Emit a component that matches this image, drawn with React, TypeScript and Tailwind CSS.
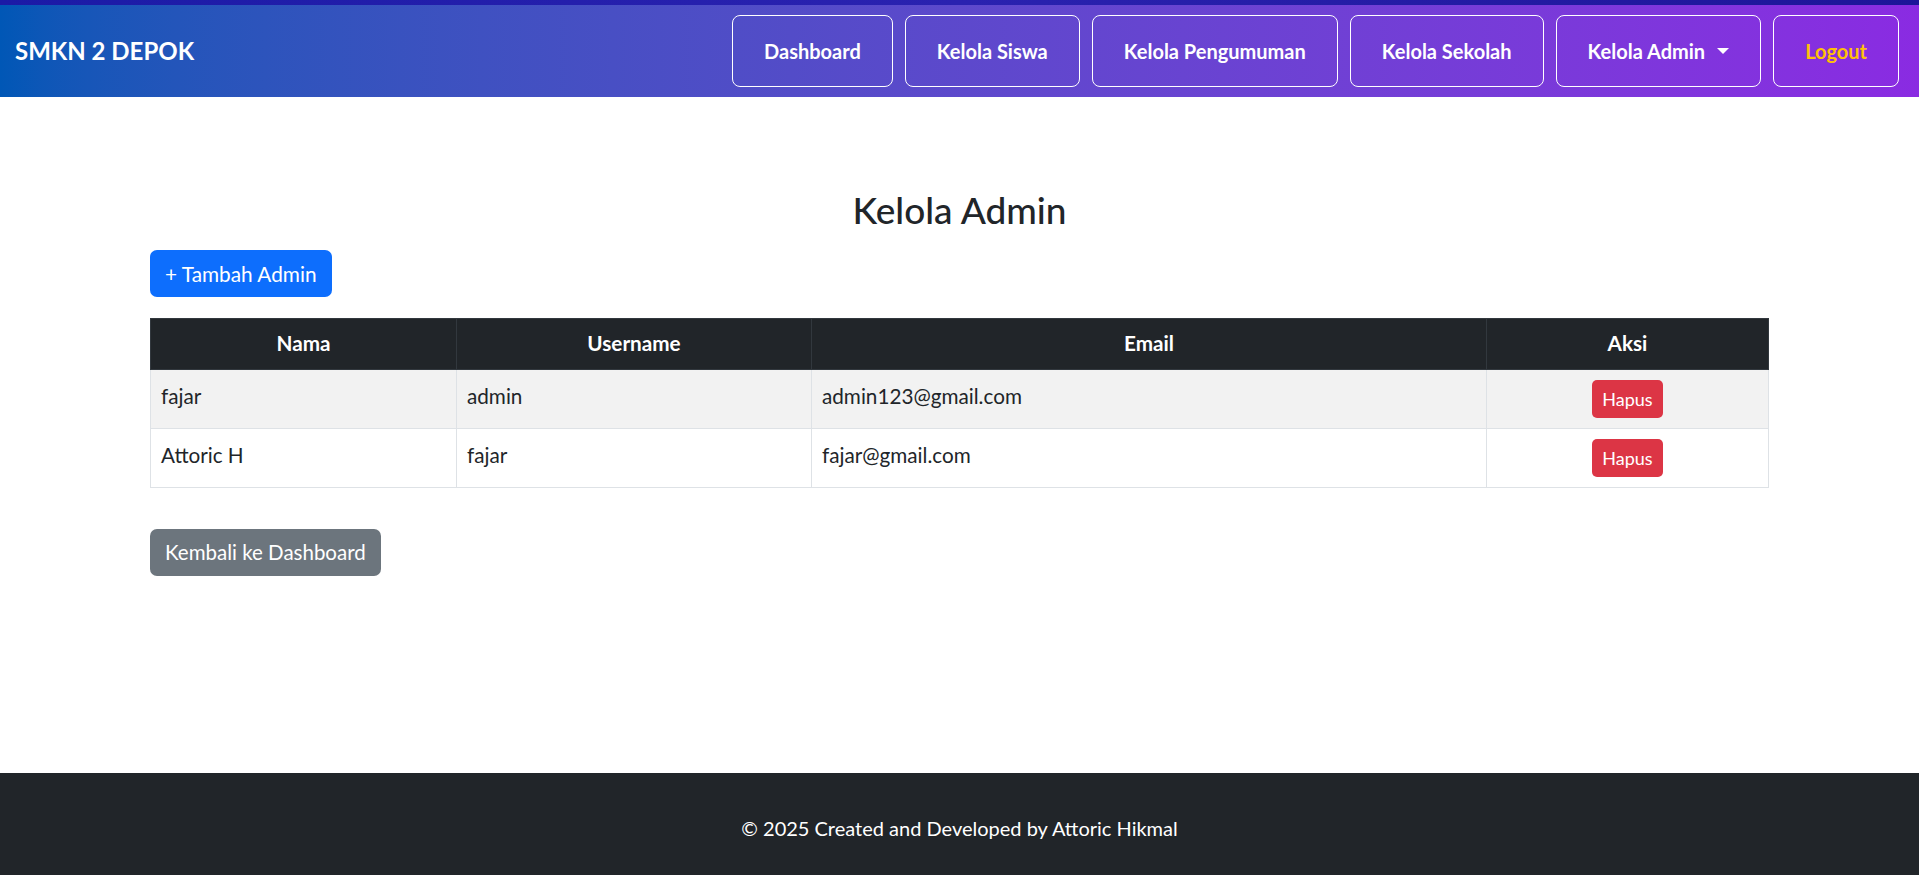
import React from "react";

const font = "font-['Lato','Liberation_Sans',sans-serif]";

type Admin = {
  nama: string;
  username: string;
  email: string;
};

const admins: Admin[] = [
  { nama: "fajar", username: "admin", email: "admin123@gmail.com" },
  { nama: "Attoric H", username: "fajar", email: "fajar@gmail.com" },
];

function NavButton({ label, gold, caret }: { label: string; gold?: boolean; caret?: boolean }) {
  return (
    <button
      className={`flex items-center h-[72px] px-[31px] border border-white rounded-[8px] text-[20px] font-bold ${
        gold ? "text-[#ffc107]" : "text-white"
      }`}
    >
      {label}
      {caret && (
        <span className="ml-3 w-0 h-0 border-x-[6px] border-x-transparent border-t-[6px] border-t-white" />
      )}
    </button>
  );
}

export default function App() {
  return (
    <div className={`min-h-screen flex flex-col bg-white text-[#212529] ${font}`}>
      {/* strip of the page background above the navbar */}
      <div className="h-[5px] bg-gradient-to-r from-[#1b1aa6] via-[#2a22b0] to-[#1d1599]" />

      <nav className="h-[92px] flex items-center justify-between pl-[15px] pr-[20px] bg-gradient-to-r from-[#0057b6] to-[#8a2be2]">
        <div className="text-white text-[24px] font-bold">SMKN 2 DEPOK</div>
        <div className="flex gap-[12px]">
          <NavButton label="Dashboard" />
          <NavButton label="Kelola Siswa" />
          <NavButton label="Kelola Pengumuman" />
          <NavButton label="Kelola Sekolah" />
          <NavButton label="Kelola Admin" caret />
          <NavButton label="Logout" gold />
        </div>
      </nav>

      <main className="flex-1 px-[150px] pt-[89px]">
        <h2 className="text-center text-[37px] leading-[48px] font-medium">Kelola Admin</h2>

        <button className="mt-[16px] h-[47px] px-[15px] rounded-[7px] bg-[#0d6efd] text-white text-[20.8px]">
          + Tambah Admin
        </button>

        <table className="mt-[21px] w-full border-collapse text-[20.7px]">
          <thead>
            <tr className="bg-[#212529] text-white">
              <th className="w-[306px] h-[51px] font-bold border border-[#32383e]">Nama</th>
              <th className="w-[355px] font-bold border border-[#32383e]">Username</th>
              <th className="w-[675px] font-bold border border-[#32383e]">Email</th>
              <th className="font-bold border border-[#32383e]">Aksi</th>
            </tr>
          </thead>
          <tbody>
            {admins.map((a, i) => (
              <tr key={a.email} className={i % 2 === 0 ? "bg-[#f2f2f2]" : "bg-white"}>
                <td className="h-[59px] px-[10px] pb-[4px] border border-[#dee2e6]">{a.nama}</td>
                <td className="px-[10px] pb-[4px] border border-[#dee2e6]">{a.username}</td>
                <td className="px-[10px] pb-[4px] border border-[#dee2e6]">{a.email}</td>
                <td className="px-[10px] border border-[#dee2e6] text-center">
                  <button className="h-[38px] px-[10px] rounded-[5px] bg-[#dc3545] text-white text-[18px]">
                    Hapus
                  </button>
                </td>
              </tr>
            ))}
          </tbody>
        </table>

        <button className="mt-[41px] h-[47px] px-[15px] rounded-[7px] bg-[#6c757d] text-white text-[20.5px]">
          Kembali ke Dashboard
        </button>
      </main>

      <footer className="bg-[#212529] text-white text-center text-[20px] leading-[30px] pt-[40px] pb-[32px]">
        © 2025 Created and Developed by Attoric Hikmal
      </footer>
    </div>
  );
}
